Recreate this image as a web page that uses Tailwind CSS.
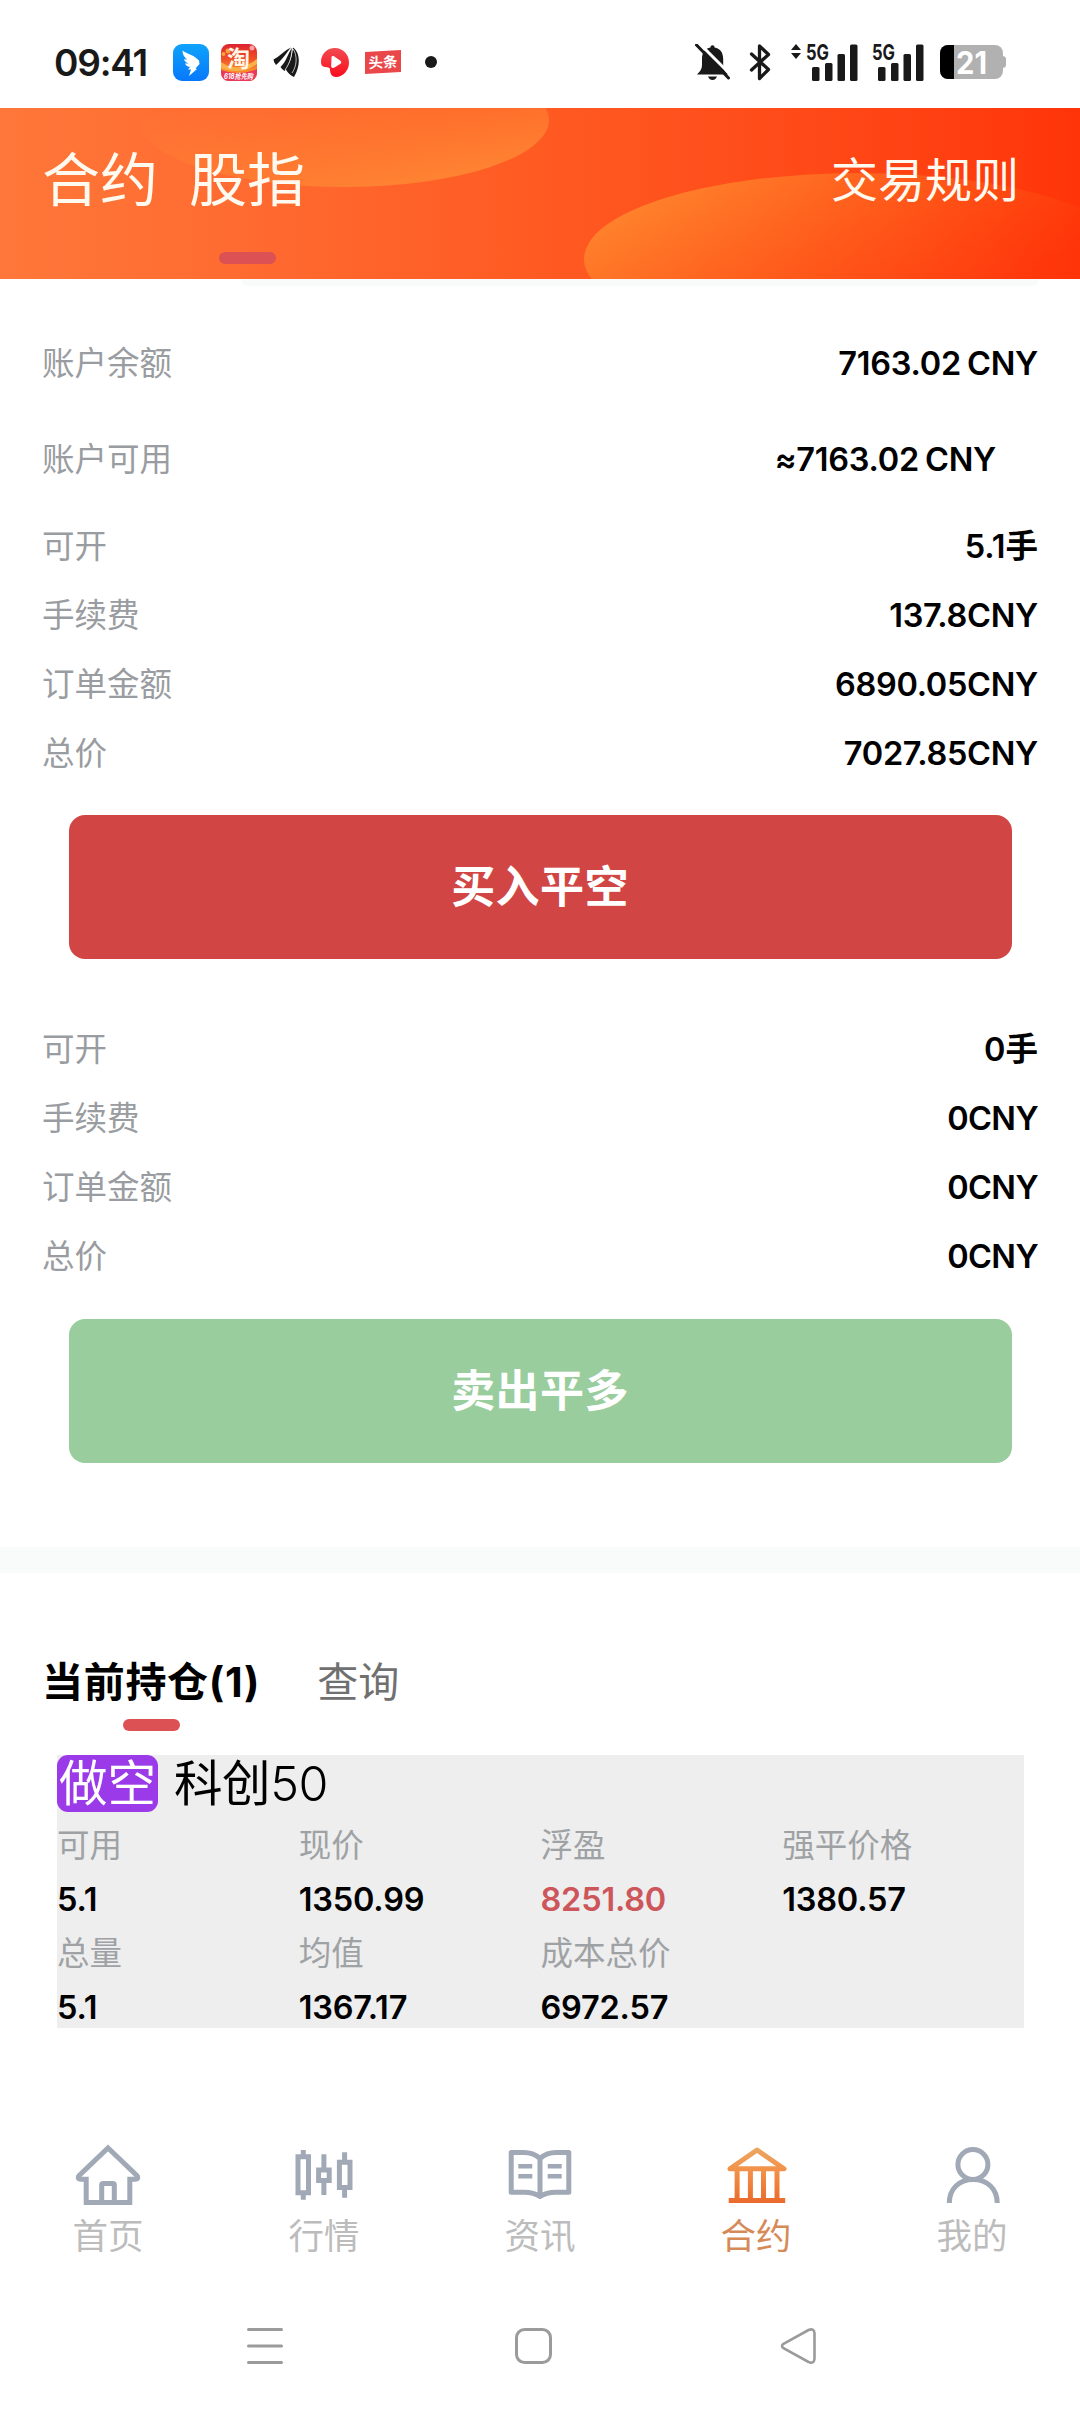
<!DOCTYPE html>
<html lang="zh-CN">
<head>
    <meta charset="UTF-8">
    <meta name="viewport" content="width=device-width, initial-scale=1.0">
    <title>合约 股指</title>
    <script src="https://cdn.jsdelivr.net/npm/@tailwindcss/browser@4"></script>
</head>
<body class="w-[1080px] h-[2412px] overflow-hidden bg-white text-black font-['Inter','Noto_Sans_CJK_SC',sans-serif] flex flex-col">
    <!-- Status bar -->
    <div class="h-[108px] shrink-0 pt-4 pl-[54px] pr-[74px] flex items-center justify-between text-[#191919]">
        <div class="flex items-center">
            <span class="w-[119px] text-[37px] leading-none font-semibold tracking-[-1.200px]">09:41</span>
            <svg class="w-9 h-[37px]" viewBox="0 0 36 37">
                <defs>
                    <linearGradient id="ding" x1="0" y1="0" x2="0" y2="1">
                        <stop offset="0" stop-color="#0fa3fb"/>
                        <stop offset="1" stop-color="#0878fb"/>
                    </linearGradient>
                </defs>
                <rect width="36" height="37" rx="9" fill="url(#ding)"/>
                <path d="M9.500 6.500C14 10 21 11 26 16.500L26.500 20L22.500 24.500L24 25L16 32L18 25.500L15 25.500L17 23C14 22.500 12.500 21 12 19.500L15.500 19.500C12.500 18 11.500 17 11 15.200L14 15.500C11 13 9.500 10 9.500 6.500Z" fill="#fff"/>
            </svg>
            <svg class="ml-3 w-9 h-[37px] overflow-visible" viewBox="0 0 36 37">
                <defs>
                    <linearGradient id="tao" x1="0" y1="0" x2="0" y2="1">
                        <stop offset="0" stop-color="#dc2331"/>
                        <stop offset="0.400" stop-color="#f04f28"/>
                        <stop offset="0.700" stop-color="#f98a2c"/>
                    </linearGradient>
                    <clipPath id="taoClip"><rect width="36" height="37" rx="8"/></clipPath>
                </defs>
                <g clip-path="url(#taoClip)">
                    <rect width="36" height="37" fill="url(#tao)"/>
                    <path d="M0 18C8 24 20 27 36 15V20C24 29 10 28 0 24Z" fill="#fbb04a"/>
                    <path d="M0 26C12 30 25 30 36 25V37H0Z" fill="#e9395a"/>
                    <circle cx="7" cy="7" r="2.500" fill="#fba23c"/>
                    <circle cx="2.500" cy="10" r="2" fill="#fba23c"/>
                    <circle cx="31" cy="4" r="2.500" fill="#f9a3a3"/>
                </g>
                <text x="6" y="23" font-size="23" font-weight="700" fill="#fff5e6" font-family="Noto Sans CJK SC">淘</text>
                <text x="3" y="35" font-size="7.500" font-weight="700" font-style="italic" fill="#fff" textLength="29" lengthAdjust="spacingAndGlyphs" font-family="Inter, Noto Sans CJK SC">618抢先购</text>
            </svg>
            <svg class="ml-4 w-7 h-[30px]" viewBox="0 0 28 30" fill="#191919">
                <path d="M0.500 12.500C6 10 12 3 18 0.500C14 5 10 12 3 18Q0.500 15.500 0.500 12.500Z"/>
                <path d="M7.500 20C13.500 14.500 15 6 19 1C18.500 7 18 16 11.500 24Q9 22.500 7.500 20Z"/>
                <path d="M12.500 22C18.500 15 19 7 20 0.500C26.500 5 28.500 17 21 30Q16 28 12.500 22Z"/>
                <path d="M20.300 2C24.500 9 24 19 19 26" fill="none" stroke="#fff" stroke-width="0.700"/>
                <path d="M19.300 2C18.300 9 17.500 15 12 23" fill="none" stroke="#fff" stroke-width="0.700"/>
            </svg>
            <svg class="ml-5 w-7 h-[29px]" viewBox="0 0 28 29">
                <defs>
                    <linearGradient id="drop" x1="0" y1="0" x2="0" y2="1">
                        <stop offset="0" stop-color="#f24b51"/>
                        <stop offset="1" stop-color="#f90d1d"/>
                    </linearGradient>
                </defs>
                <path d="M14 0C22 0 28 6.500 28 14.500S22 29 15 29C11 29 9 26 9 21.500C9 19.500 7.500 19.500 4 19C1 18.500 0 17 0 14C0 6 6 0 14 0Z" fill="url(#drop)"/>
                <path d="M10.500 9.500C10.500 8 12 7.700 13 8.300L19.500 12.700Q21.200 14.200 19.500 15.700L13 19.700C11.500 20.500 10 19.500 10.200 18Z" fill="#fff"/>
            </svg>
            <svg class="ml-4 w-9 h-6 overflow-visible" viewBox="0 0 36 24">
                <path d="M0 2L36 0V22L0 24Z" fill="#e9474a"/>
                <text x="3.500" y="17.500" font-size="14.500" font-weight="700" fill="#fff" transform="rotate(-3 18 12)" font-family="Noto Sans CJK SC">头条</text>
            </svg>
            <div class="ml-6 w-3 h-3 rounded-full bg-[#191919]"></div>
        </div>
        <div class="flex items-center">
            <!-- Muted bell -->
            <svg class="w-9 h-9" viewBox="0 0 36 36" fill="#191919">
                <path d="M2 30.500C5 27.500 7 25 7 21V15C7 8 10 4.500 15.500 3.500V2.500Q17.500 0 19.500 2.500V3.500C25 4.500 28 8 28.200 15V21C28.200 25 30 27.500 33 30.500Z"/>
                <path d="M13 32.500H22Q20.500 36 17.500 36T13 32.500Z"/>
                <path d="M3.500 -1.500L37 32" stroke="#fff" stroke-width="3"/>
                <path d="M1.500 1L33.500 34" stroke="#191919" stroke-width="3" stroke-linecap="round"/>
            </svg>
            <svg class="ml-[18px] w-[22px] h-[37px]" viewBox="0 0 22 37" fill="none" stroke="#191919" stroke-width="3.300" stroke-linecap="round" stroke-linejoin="round">
                <path d="M2.500 10L19.500 25.500L10.500 34.500V2L19.500 10.500L2.500 26"/>
            </svg>
            <!-- First SIM -->
            <svg class="ml-5 w-[68px] h-[38px] overflow-visible" viewBox="0 0 68 38" fill="#191919">
                <path d="M5 1L10 7H0ZM5 16L0 10H10Z"/>
                <text x="15" y="16.500" font-size="22" font-weight="700" textLength="23" lengthAdjust="spacingAndGlyphs" font-family="Inter">5G</text>
                <rect x="21" y="24" width="7.500" height="14" rx="1.500"/>
                <rect x="34" y="20" width="7.500" height="18" rx="1.500"/>
                <rect x="46.500" y="11" width="7.500" height="27" rx="1.500"/>
                <rect x="59" y="1.500" width="7.500" height="36.500" rx="1.500"/>
            </svg>
            <!-- Second SIM -->
            <svg class="ml-[13px] w-[53px] h-[38px] overflow-visible" viewBox="0 0 53 38" fill="#191919">
                <text x="0" y="16.500" font-size="22" font-weight="700" textLength="23" lengthAdjust="spacingAndGlyphs" font-family="Inter">5G</text>
                <rect x="6" y="24" width="7.500" height="14" rx="1.500"/>
                <rect x="19" y="20" width="7.500" height="18" rx="1.500"/>
                <rect x="31.500" y="11" width="7.500" height="27" rx="1.500"/>
                <rect x="44" y="1.500" width="7.500" height="36.500" rx="1.500"/>
            </svg>
            <!-- Battery -->
            <svg class="ml-[15px] w-[66px] h-[34px] overflow-visible" viewBox="0 0 66 34">
                <defs><clipPath id="bat"><rect width="63" height="34" rx="8"/></clipPath></defs>
                <path d="M62 11Q66 11 66 14V20Q66 23 62 23Z" fill="#b1b1b1"/>
                <g clip-path="url(#bat)">
                    <rect width="63" height="34" fill="#b1b1b1"/>
                    <rect width="14" height="34" fill="#000"/>
                </g>
                <text x="16" y="28.500" font-size="31" font-weight="700" fill="#fff" textLength="31" lengthAdjust="spacingAndGlyphs" font-family="Inter">21</text>
            </svg>
        </div>
    </div>

    <!-- Header -->
    <header class="relative h-[171px] shrink-0 bg-linear-to-r from-[#ff773a] via-[#ff5a22] to-[#ff3408] text-[#fffaf0]">
        <svg class="absolute inset-0 w-full h-full" viewBox="0 0 1080 171">
            <defs>
                <linearGradient id="blobTop" x1="0.300" y1="0.300" x2="0.700" y2="1">
                    <stop offset="0" stop-color="#ff8333" stop-opacity="0"/>
                    <stop offset="1" stop-color="#ff8433"/>
                </linearGradient>
                <linearGradient id="blobBottom" x1="0" y1="0.300" x2="0.750" y2="0.700">
                    <stop offset="0" stop-color="#ff842d"/>
                    <stop offset="1" stop-color="#ff5a14" stop-opacity="0"/>
                </linearGradient>
            </defs>
            <ellipse cx="344" cy="12" rx="205" ry="67" fill="url(#blobTop)"/>
            <ellipse cx="859" cy="151" rx="275" ry="86" fill="url(#blobBottom)"/>
        </svg>
        <div class="relative flex items-center justify-between h-[142px] pl-[42px] pr-[61px] leading-none">
            <div class="flex gap-[31px] pt-0.5 text-[58px]">
                <span>合约</span>
                <span>股指</span>
            </div>
            <span class="text-[47px]">交易规则</span>
        </div>
        <div class="relative ml-[219px] mt-0.5 w-[57px] h-3 rounded-full bg-[#dc5154]"></div>
    </header>
    <div class="ml-[241px] w-[798px] h-[7px] shrink-0 rounded-b-lg bg-[#f9fafa]"></div>

    <!-- Account -->
    <section class="pt-[30px] px-[42px] text-[32.500px]">
        <div class="flex items-center justify-between h-24">
            <span class="text-[#999ca0]">账户余额</span>
            <span class="font-semibold tracking-[-0.250px] [word-spacing:-2px]">7163.02 CNY</span>
        </div>
        <div class="flex items-center justify-between h-24 pr-[42px]">
            <span class="text-[#999ca0]">账户可用</span>
            <span class="font-semibold tracking-[-0.250px] [word-spacing:-2px]">≈7163.02 CNY</span>
        </div>
    </section>

    <!-- Buy -->
    <section class="mt-[5px] px-[42px] text-[32.500px]">
        <div class="flex items-center justify-between h-[69px]">
            <span class="text-[#999ca0]">可开</span>
            <span class="font-semibold">5.1手</span>
        </div>
        <div class="flex items-center justify-between h-[69px]">
            <span class="text-[#999ca0]">手续费</span>
            <span class="font-semibold tracking-[-0.300px]">137.8CNY</span>
        </div>
        <div class="flex items-center justify-between h-[69px]">
            <span class="text-[#999ca0]">订单金额</span>
            <span class="font-semibold tracking-[-0.300px]">6890.05CNY</span>
        </div>
        <div class="flex items-center justify-between h-[69px]">
            <span class="text-[#999ca0]">总价</span>
            <span class="font-semibold tracking-[-0.300px]">7027.85CNY</span>
        </div>
        <button class="block mt-[26px] mx-auto w-[943px] h-36 rounded-2xl bg-[#d14645] text-white text-[44px] font-bold tracking-[0.400px]">买入平空</button>
    </section>

    <!-- Sell -->
    <section class="mt-[57px] px-[42px] text-[32.500px]">
        <div class="flex items-center justify-between h-[69px]">
            <span class="text-[#999ca0]">可开</span>
            <span class="font-semibold">0手</span>
        </div>
        <div class="flex items-center justify-between h-[69px]">
            <span class="text-[#999ca0]">手续费</span>
            <span class="font-semibold tracking-[-0.600px]">0CNY</span>
        </div>
        <div class="flex items-center justify-between h-[69px]">
            <span class="text-[#999ca0]">订单金额</span>
            <span class="font-semibold tracking-[-0.600px]">0CNY</span>
        </div>
        <div class="flex items-center justify-between h-[69px]">
            <span class="text-[#999ca0]">总价</span>
            <span class="font-semibold tracking-[-0.600px]">0CNY</span>
        </div>
        <button class="block mt-[27px] mx-auto w-[943px] h-36 rounded-2xl bg-[#99cd9d] text-white text-[44px] font-bold tracking-[0.400px]">卖出平多</button>
    </section>

    <div class="mt-[84px] h-[26px] shrink-0 bg-[#f9fafa]"></div>

    <!-- Positions -->
    <section class="px-[42px]">
        <div class="flex items-center gap-[57px] h-[146px] pt-[73px] text-[41px] leading-none">
            <span class="font-bold tracking-[0.700px]">当前持仓(1)</span>
            <span class="text-[#707070]">查询</span>
        </div>
        <div class="ml-[81px] w-[57px] h-3 rounded-full bg-[#dc5154]"></div>
        <div class="mt-6 ml-[15px] w-[967px] h-[273px] bg-[#eee]">
            <div class="flex items-center gap-4 h-[57px] text-[48.500px] leading-none">
                <span class="flex items-center justify-center w-[101px] h-[57px] pt-px rounded-[11px] bg-[#9a3ae8] text-white">做空</span>
                <span class="pt-0.5 tracking-[-0.400px]">科创<span class="font-light">50</span></span>
            </div>
            <div class="grid grid-cols-4 grid-rows-[66px_42px_66px_42px] items-center pt-px text-[32.500px] leading-none">
                <span class="text-[#9fa2a5]">可用</span>
                <span class="text-[#9fa2a5]">现价</span>
                <span class="text-[#9fa2a5]">浮盈</span>
                <span class="text-[#9fa2a5]">强平价格</span>
                <span class="font-semibold tracking-[-0.200px]">5.1</span>
                <span class="font-semibold tracking-[-0.200px]">1350.99</span>
                <span class="font-semibold tracking-[-0.200px] text-[#cd565b]">8251.80</span>
                <span class="font-semibold tracking-[-0.200px]">1380.57</span>
                <span class="text-[#9fa2a5]">总量</span>
                <span class="text-[#9fa2a5]">均值</span>
                <span class="text-[#9fa2a5]">成本总价</span>
                <span></span>
                <span class="font-semibold tracking-[-0.200px]">5.1</span>
                <span class="font-semibold tracking-[-0.200px]">1367.17</span>
                <span class="font-semibold tracking-[-0.200px]">6972.57</span>
            </div>
        </div>
    </section>

    <!-- Tab bar -->
    <nav class="mt-[111px] grid grid-cols-5 text-[35.500px] leading-none text-[#bcbcbc]">
        <a href="#" class="flex flex-col items-center gap-2">
            <svg class="w-[72px] h-[72px]" viewBox="0 0 72 72" fill="none" stroke="#a0a9b5" stroke-width="5">
                <path d="M14.200 40.300H8.500Q4.500 39.500 7.200 36.500L36 9L64.800 36.500Q67.500 39.500 63.500 40.300H57.800V63.500H14.200Z"/>
                <path d="M29.700 63.500V46Q29.700 44.500 31.200 44.500H40.800Q42.300 44.500 42.300 46V63.500"/>
            </svg>
            <span>首页</span>
        </a>
        <a href="#" class="flex flex-col items-center gap-2">
            <svg class="w-[72px] h-[72px]" viewBox="0 0 72 72" fill="none" stroke="#a0a9b5" stroke-width="5">
                <path d="M10 17.800H20.500V53.800H10ZM15.300 11V17M15.300 55V60.700"/>
                <path d="M30.600 31H41.200V41.500H30.600ZM35.900 15.300V30M35.900 43V56"/>
                <path d="M51.400 23.200H62V48.500H51.400ZM56.600 13.300V22M56.600 50V58.700"/>
            </svg>
            <span>行情</span>
        </a>
        <a href="#" class="flex flex-col items-center gap-2">
            <svg class="w-[72px] h-[72px]" viewBox="0 0 72 72" fill="none" stroke="#a0a9b5" stroke-width="5" stroke-linejoin="round">
                <path d="M36 19.500Q29 13.600 20 13.600H7.200V53.200H20Q30 53.200 36 57.500Q42 53.200 52 53.200H64.800V13.600H52Q43 13.600 36 19.500V57"/>
                <path d="M14.300 27.300H28.300M14.300 37.300H28.300M43.700 27.300H57.700M43.700 37.300H57.700" stroke-width="4.500"/>
            </svg>
            <span>资讯</span>
        </a>
        <a href="#" class="flex flex-col items-center gap-2 text-[#d68a58]">
            <svg class="w-[72px] h-[72px]" viewBox="0 0 72 72" fill="none" stroke="url(#bank)" stroke-width="5" stroke-linejoin="round">
                <defs>
                    <linearGradient id="bank" gradientUnits="userSpaceOnUse" x1="0" y1="8" x2="0" y2="64">
                        <stop offset="0" stop-color="#eaa862"/>
                        <stop offset="0.400" stop-color="#f2924a"/>
                        <stop offset="1" stop-color="#ea6a2c"/>
                    </linearGradient>
                </defs>
                <path d="M10 29.800L37 11L64 29.800Z"/>
                <path d="M17.100 31V61M30.400 31V61M43.500 31V61M57 31V61M8.700 61.400H65.200"/>
            </svg>
            <span>合约</span>
        </a>
        <a href="#" class="flex flex-col items-center gap-2">
            <svg class="w-[72px] h-[72px]" viewBox="0 0 72 72" fill="none" stroke="#a0a9b5" stroke-width="5">
                <circle cx="36.900" cy="25.500" r="15"/>
                <path d="M13.300 64C13.300 50 23 40.500 37.200 40.500S61.200 50 61.200 64"/>
            </svg>
            <span>我的</span>
        </a>
    </nav>

    <!-- System navigation -->
    <div class="mt-[72px] flex items-center pl-[246px] gap-[231px]">
        <svg class="w-[38px] h-[38px]" viewBox="0 0 38 38" fill="none" stroke="#9b9b9b" stroke-width="3" stroke-linecap="round">
            <path d="M2.500 2.500H35.500M2.500 19H35.500M2.500 35.500H35.500"/>
        </svg>
        <svg class="w-[38px] h-[38px]" viewBox="0 0 38 38" fill="none" stroke="#9b9b9b" stroke-width="3">
            <rect x="1.500" y="2.500" width="34" height="33" rx="8"/>
        </svg>
        <svg class="-ml-1 w-[38px] h-[38px]" viewBox="0 0 38 38" fill="none" stroke="#9b9b9b" stroke-width="2.600">
            <path d="M3.500 16.800L28.500 3Q34 0.800 34.500 6V32Q34 37.200 28.500 35L3.500 21.200Q0.500 19 3.500 16.800Z"/>
        </svg>
    </div>
</body>
</html>
